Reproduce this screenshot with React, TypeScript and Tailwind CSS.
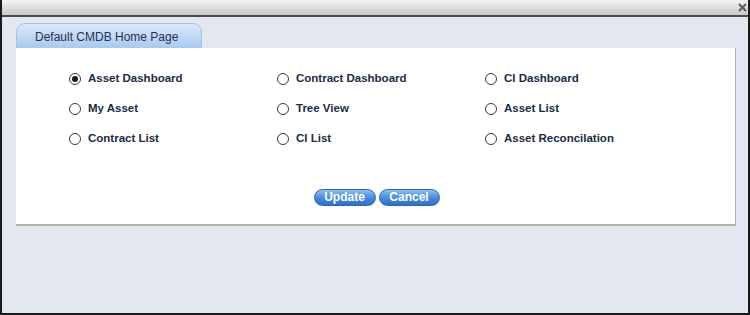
import React, { useState } from 'react';

const options = [
    'Asset Dashboard',
    'Contract Dashboard',
    'CI Dashboard',
    'My Asset',
    'Tree View',
    'Asset List',
    'Contract List',
    'CI List',
    'Asset Reconcilation',
];

export default function App() {
    const [selected, setSelected] = useState('Asset Dashboard');

    return (
        <div className="w-[750px] h-[315px] flex flex-col border-l-2 border-r-2 border-b-2 border-[#1a1a1a] bg-[#e3e7ef] font-['Liberation_Sans',Arial,sans-serif]">
            {/* Title bar */}
            <div className="h-[17px] flex justify-end items-start pt-[3px] pr-[1px] bg-gradient-to-b from-[#f4f4f4] to-[#c9c9c9] border-b-2 border-[#4b4b4b]">
                <svg width="9" height="9" viewBox="0 0 9 9">
                    <path d="M1 1 L8 8 M8 1 L1 8" stroke="#5e5e5e" strokeWidth="2.2" />
                </svg>
            </div>

            {/* Content */}
            <div className="flex-1 pl-[14px] pr-[12px] pt-[6px]">
                {/* Tab */}
                <div className="flex">
                    <div className="w-[186px] h-[25px] rounded-t-[9px] border border-b-0 border-[#a9c2e0] bg-gradient-to-b from-[#dbe8f8] to-[#a9c9ef] pl-[18px] pt-[4px] text-[12px] text-[#1d3553]">
                        Default CMDB Home Page
                    </div>
                </div>

                {/* Panel */}
                <div className="h-[178px] bg-white border-b-2 border-r border-[#aeb5a1] flex flex-col">
                    <div className="grid grid-cols-[208px_208px_200px] gap-y-[17px] pl-[53px] pt-[24px]">
                        {options.map((opt) => (
                            <button
                                key={opt}
                                onClick={() => setSelected(opt)}
                                className="flex items-center gap-[7px] text-left h-[13px]"
                            >
                                <span className="w-[12px] h-[12px] rounded-full border border-[#3a3a3a] bg-white flex items-center justify-center">
                                    {selected === opt && <span className="w-[6px] h-[6px] rounded-full bg-[#1a1a1a]" />}
                                </span>
                                <span className="text-[11.5px] font-bold text-[#1a2b47]">{opt}</span>
                            </button>
                        ))}
                    </div>

                    <div className="flex justify-center gap-[3px] mt-[44px] pl-[2px]">
                        <button className="w-[62px] h-[17px] rounded-full border border-[#2f64b5] bg-gradient-to-b from-[#8fbdf0] via-[#4a8ee0] to-[#2c6fcd] text-white text-[12px] font-bold leading-[15px]">
                            Update
                        </button>
                        <button className="w-[61px] h-[17px] rounded-full border border-[#2f64b5] bg-gradient-to-b from-[#8fbdf0] via-[#4a8ee0] to-[#2c6fcd] text-white text-[12px] font-bold leading-[15px]">
                            Cancel
                        </button>
                    </div>
                </div>
            </div>
        </div>
    );
}
